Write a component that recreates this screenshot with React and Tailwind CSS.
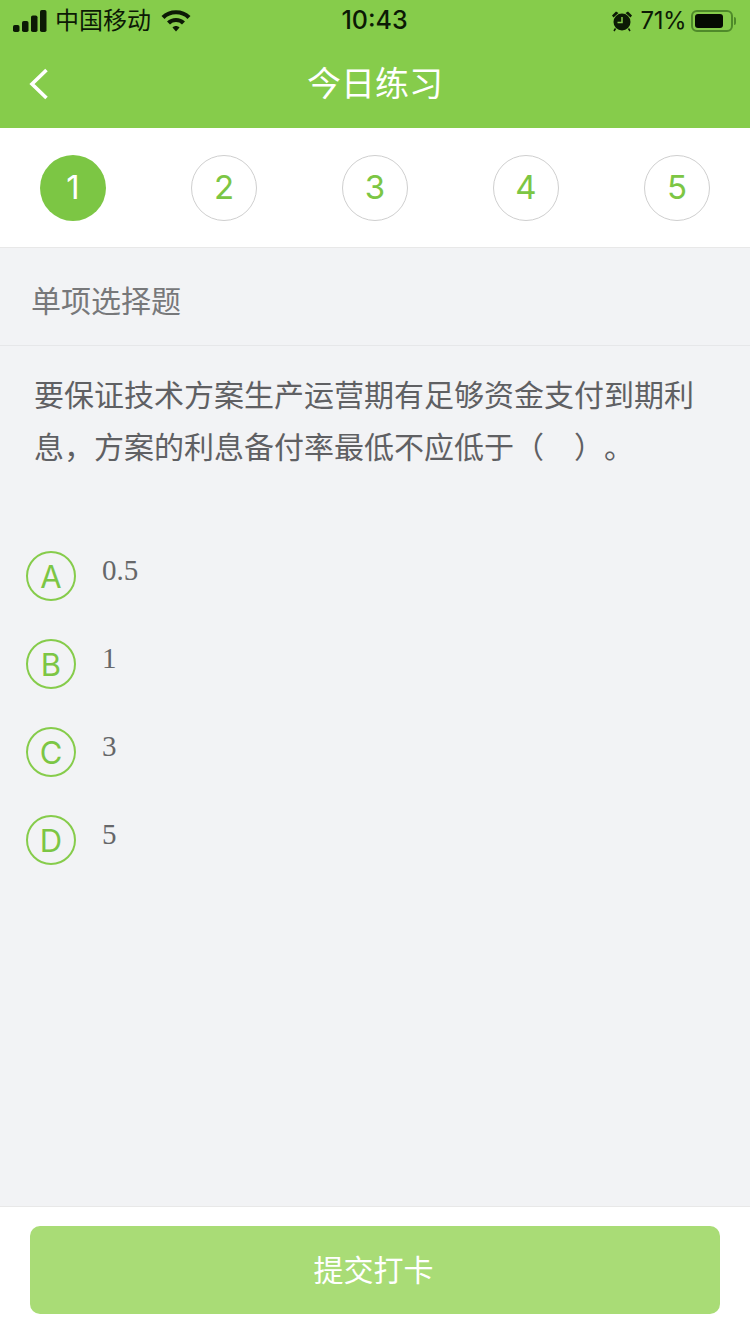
import React from 'react';

const sans = 'font-["Liberation_Sans","Noto_Sans_CJK_SC",sans-serif]';

const steps = ['1', '2', '3', '4', '5'];
const options = [
  { key: 'A', text: '0.5' },
  { key: 'B', text: '1' },
  { key: 'C', text: '3' },
  { key: 'D', text: '5' },
];

const SignalIcon = () => (
  <svg width="34" height="22" viewBox="0 0 34 22" fill="#0c1a05">
    <rect x="0" y="15" width="6.5" height="7" rx="1.8" />
    <rect x="9" y="11" width="6.5" height="11" rx="1.8" />
    <rect x="18" y="5.5" width="6.5" height="16.5" rx="1.8" />
    <rect x="27" y="0" width="6.5" height="22" rx="1.8" />
  </svg>
);

const WifiIcon = () => (
  <svg width="30" height="22" viewBox="0 0 30 22" fill="none" stroke="#0c1a05" strokeWidth="4.2">
    <path d="M2 7.5 C9 0.5 21 0.5 28 7.5" />
    <path d="M7.5 13 C11.5 9 18.5 9 22.5 13" />
    <path d="M11.5 17.5 L15 21.5 L18.5 17.5 C16.5 15.5 13.5 15.5 11.5 17.5 Z" fill="#0c1a05" stroke="none" />
  </svg>
);

const AlarmIcon = () => (
  <svg width="22" height="22" viewBox="0 0 22 22">
    <circle cx="11" cy="12" r="8.5" fill="#0c1a05" />
    <path d="M11 7 V12.5 H6.5" fill="none" stroke="#86cc4b" strokeWidth="1.5" />
    <path d="M1 5.5 L5 1.5 L7.5 3 L2.5 7.5 Z M21 5.5 L17 1.5 L14.5 3 L19.5 7.5 Z" fill="#0c1a05" />
    <path d="M4.5 18.5 L3 21 M17.5 18.5 L19 21" stroke="#0c1a05" strokeWidth="1.5" />
  </svg>
);

const BatteryIcon = () => (
  <div className="flex items-center gap-[1px]">
    <div className="w-[42px] h-[22px] rounded-[6px] border-2 border-[#4f8a2a] p-[2px]">
      <div className="w-[28px] h-full rounded-[3px] bg-[#050a02]" />
    </div>
    <div className="w-[2px] h-[8px] rounded-r-sm bg-[#4f8a2a]" />
  </div>
);

export default function App() {
  return (
    <div className={`w-[750px] h-[1334px] flex flex-col bg-[#f2f3f5] overflow-hidden ${sans}`}>
      <div className="h-[128px] shrink-0 bg-[#86cc4b] flex flex-col">
        <div className="h-[40px] pl-[13px] pr-[14px] pt-[1px] grid grid-cols-3 items-center text-[#0c1a05]">
          <div className="flex items-center gap-[8px]">
            <SignalIcon />
            <span className="text-[24px] leading-none">中国移动</span>
            <span className="ml-[2px]"><WifiIcon /></span>
          </div>
          <div className="text-center text-[25px] leading-none font-['Inter',sans-serif] font-medium">10:43</div>
          <div className="flex items-center justify-end gap-[8px]">
            <AlarmIcon />
            <span className="text-[24px] leading-none font-['Inter',sans-serif] tracking-[-0.5px] mr-[-3px]">71%</span>
            <BatteryIcon />
          </div>
        </div>
        <div className="relative flex-1 flex items-center justify-center">
          <svg className="absolute left-[28px] top-[27px]" width="22" height="34" viewBox="0 0 22 34" fill="none" stroke="#ffffff" strokeWidth="3.6">
            <path d="M18.5 3 L4 17 L18.5 31" />
          </svg>
          <span className="text-[34px] leading-none text-white">今日练习</span>
        </div>
      </div>

      <div className="h-[120px] shrink-0 bg-white border-b border-[#e8e8e8] px-[40px] flex items-center justify-between font-['Inter',sans-serif]">
        {steps.map((step, i) => (
          <div
            key={step}
            className={`w-[66px] h-[66px] rounded-full flex items-center justify-center text-[33px] font-normal ${
              i === 0 ? 'bg-[#7cc644] text-white' : 'border border-[#cfcfcf] text-[#7cc644]'
            }`}
          >
            {step}
          </div>
        ))}
      </div>

      <div className="h-[98px] shrink-0 border-b border-[#e6e7e9] pl-[31px] pt-[9px] flex items-center text-[30px] text-[#77787a]">
        单项选择题
      </div>

      <div className="pl-[34px] pr-[35px] pt-[24px] text-[30px] leading-[52px] text-[#5f6063] [text-spacing-trim:space-all]">
        要保证技术方案生产运营期有足够资金支付到期利息，方案的利息备付率最低不应低于（　）。
      </div>

      <div className="flex-1 pl-[26px] pt-[77px] flex flex-col gap-[38px]">
        {options.map((opt) => (
          <div key={opt.key} className="flex items-start">
            <div className="w-[50px] h-[50px] rounded-full border-2 border-[#86cc4b] flex items-center justify-center pt-[2px] text-[31px] font-normal text-[#7cc644] font-['Inter',sans-serif]">
              {opt.key}
            </div>
            <div className="ml-[26px] text-[29px] leading-[38px] text-[#666769] font-['Liberation_Serif',serif]">
              {opt.text}
            </div>
          </div>
        ))}
      </div>

      <div className="h-[128px] shrink-0 bg-white border-t border-[#e8e8e8] pl-[30px] pr-[30px] pt-[19px]">
        <div className="h-[88px] rounded-[10px] bg-[#a9dc76] flex items-center justify-center pr-[3px] text-[30px] text-white">
          提交打卡
        </div>
      </div>
    </div>
  );
}
